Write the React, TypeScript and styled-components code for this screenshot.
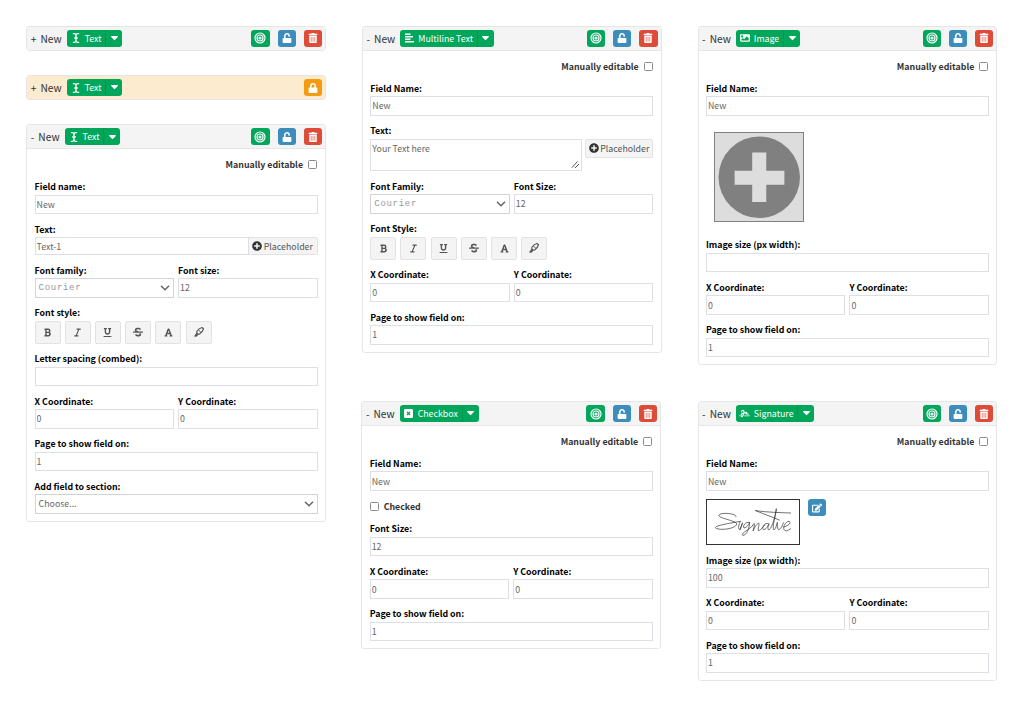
import React from 'react';
import {
    FaBold, FaEdit, FaFont, FaImage, FaLock,
    FaPlusCircle, FaStrikethrough, FaTrashAlt, FaUnderline, FaUnlock
} from 'react-icons/fa';
import { FaItalic, FaSignature } from 'react-icons/fa6';
import { LuTarget } from 'react-icons/lu';
import { PiCursorTextBold } from 'react-icons/pi';
import styled, { createGlobalStyle } from 'styled-components';


const GlobalStyle = createGlobalStyle`
    * {
        box-sizing: border-box;
    }

    body {
        margin: 0;
        background-color: #fff;
        color: #333;
        font-family: "Noto Sans CJK JP", "Open Sans", sans-serif;
        font-size: 8.8px;
    }

    input, textarea, button {
        font-family: inherit;
        font-size: inherit;
        margin: 0;
    }
`

const LinesIcon = () => (
    <svg width="9" height="10" viewBox="0 0 18 20" fill="currentColor">
        <rect x="0" y="1" width="11" height="3" />
        <rect x="0" y="6" width="16" height="3" />
        <rect x="0" y="11" width="11" height="3" />
        <rect x="0" y="16" width="18" height="3" />
    </svg>
)

const CrossBoxIcon = () => (
    <svg width="9" height="9" viewBox="0 0 18 18">
        <rect width="18" height="18" rx="2.5" fill="#fff" />
        <path d="M6 6L12 12M12 6L6 12" stroke="#00a65a" strokeWidth="2.6" />
    </svg>
)

const PenIcon = () => (
    <svg width="12" height="12" viewBox="0 0 24 24" fill="none" stroke="currentColor" strokeLinejoin="round" strokeLinecap="round">
        <path d="M18 3L21 5.500C20 9.500 17 14 12.500 16.500L8 15.500L7.500 11C10 7 14 4 18 3Z" strokeWidth="2.2" />
        <path d="M11.500 8.500L15.500 12.500" strokeWidth="2" />
        <path d="M7.500 14L3 20.500H7.500L10 17Z" strokeWidth="1.4" fill="currentColor" />
    </svg>
)

const Chevron = () => (
    <svg width="10" height="6" viewBox="0 0 20 12" fill="none" stroke="#666" strokeWidth="3">
        <path d="M2 1.5L10 9.5L18 1.5" />
    </svg>
)

const SignatureDrawing = () => (
    <svg width="92" height="44" viewBox="19 17 276 132" fill="none" stroke="#333" strokeWidth="2.1" strokeLinecap="round">
        <path d="M106 67C112 60 72 53 57 60C44 70 94 76 107 86C116 98 72 110 48 103C34 97 60 91 119 81" />
        <path d="M119 81C114 90 111 104 117 106C121 100 122 92 125 88M125 86L119 106" />
        <path d="M146 84C134 82 125 95 130 101C138 101 144 90 147 84C146 102 138 124 126 123C120 117 140 110 156 94" />
        <path d="M156 94C160 86 162 84 161 94L157 110C163 96 172 84 175 87C177 93 168 110 175 109C182 105 188 97 193 92" />
        <path d="M203 88C192 83 182 99 188 106C196 106 202 95 205 88C201 98 200 108 206 106C214 99 224 68 227 43C225 66 214 95 219 106C224 108 227 94 230 84C230 94 230 109 236 106C243 99 246 92 248 85" />
        <path d="M248 98C258 97 271 88 267 82C260 76 246 94 250 106C255 113 264 108 270 103" />
        <path d="M165 49L236 77M165 49C200 54 240 55 270 56" />
    </svg>
)

type PanelProps = {
    icon: React.ReactNode;
    type: string;
    locked?: boolean;
    offset?: number;
    children?: React.ReactNode;
}

function Panel({ icon, type, locked, offset, children }: PanelProps) {
    return (
        <Card $offset={offset}>
            <Header $locked={locked} $open={!!children}>
                <Toggle>{children ? '-' : '+'}</Toggle>
                <Title>New</Title>
                <TypeButton>
                    <span className='icon'>{icon}</span>
                    <span className='name'>{type}</span>
                    <span className='caret'>
                        <svg width="7" height="4.5" viewBox="0 0 16 10" fill="#fff">
                            <path d="M1.5 0H14.5C16 0 16 1.6 15 2.6L9.4 8.6Q8 10 6.6 8.6L1 2.6C0 1.6 0 0 1.5 0Z" />
                        </svg>
                    </span>
                </TypeButton>
                <Actions>
                    {locked ? (
                        <IconButton $color='#f39c12'><FaLock size={10} /></IconButton>
                    ) : (
                        <>
                            <IconButton $color='#00a65a'><LuTarget size={12} strokeWidth={2.4} /></IconButton>
                            <IconButton $color='#3c8dbc'><FaUnlock size={10} /></IconButton>
                            <IconButton $color='#dd4b39'><FaTrashAlt size={10} /></IconButton>
                        </>
                    )}
                </Actions>
            </Header>
            {children && (
                <Body>
                    <CheckRow $right>
                        Manually editable <CheckBox type='checkbox' />
                    </CheckRow>
                    {children}
                </Body>
            )}
        </Card>
    )
}

function Field({ label, children }: { label: string; children: React.ReactNode }) {
    return (
        <FieldBox>
            <Label>{label}</Label>
            {children}
        </FieldBox>
    )
}

const TextField = ({ label, value = '' }: { label: string; value?: string }) => (
    <Field label={label}>
        <Input defaultValue={value} />
    </Field>
)

const Coordinates = () => (
    <Columns>
        <TextField label='X Coordinate:' value='0' />
        <TextField label='Y Coordinate:' value='0' />
    </Columns>
)

const PageField = () => <TextField label='Page to show field on:' value='1' />

const FontFields = ({ family, size }: { family: string; size: string }) => (
    <Columns>
        <Field label={family}>
            <Select $mono>Courier <Chevron /></Select>
        </Field>
        <TextField label={size} value='12' />
    </Columns>
)

const FontStyle = ({ label }: { label: string }) => (
    <Field label={label}>
        <StyleButtons>
            <button><FaBold size={9} /></button>
            <button><FaItalic size={9} /></button>
            <button><FaUnderline size={9} /></button>
            <button><FaStrikethrough size={10} /></button>
            <button><FaFont size={9} /></button>
            <button><PenIcon /></button>
        </StyleButtons>
    </Field>
)

function App() {
    return (
        <Page>
            <GlobalStyle />
            <Column $gap={24.2}>
                <Panel icon={<PiCursorTextBold size={14} />} type='Text' />
                <Panel icon={<PiCursorTextBold size={14} />} type='Text' locked />
                <Panel icon={<PiCursorTextBold size={14} />} type='Text'>
                    <TextField label='Field name:' value='New' />
                    <Field label='Text:'>
                        <InputGroup>
                            <Input $short defaultValue='Text-1' />
                            <Placeholder $joined><FaPlusCircle size={10} />Placeholder</Placeholder>
                        </InputGroup>
                    </Field>
                    <FontFields family='Font family:' size='Font size:' />
                    <FontStyle label='Font style:' />
                    <TextField label='Letter spacing (combed):' />
                    <Coordinates />
                    <PageField />
                    <Field label='Add field to section:'>
                        <Select>Choose... <Chevron /></Select>
                    </Field>
                </Panel>
            </Column>
            <Column $gap={48.5}>
                <Panel icon={<LinesIcon />} type='Multiline Text' offset={0.6}>
                    <TextField label='Field Name:' value='New' />
                    <Field label='Text:'>
                        <InputGroup $gap={3}>
                            <TextArea>
                                Your Text here
                                <svg width="9" height="9" viewBox="0 0 18 18" stroke="#555" strokeWidth="2">
                                    <path d="M2 15L13 3M8 16L16 8" />
                                </svg>
                            </TextArea>
                            <Placeholder><FaPlusCircle size={10} />Placeholder</Placeholder>
                        </InputGroup>
                    </Field>
                    <FontFields family='Font Family:' size='Font Size:' />
                    <FontStyle label='Font Style:' />
                    <Coordinates />
                    <PageField />
                </Panel>
                <Panel icon={<CrossBoxIcon />} type='Checkbox'>
                    <TextField label='Field Name:' value='New' />
                    <CheckRow>
                        <CheckBox type='checkbox' /> Checked
                    </CheckRow>
                    <TextField label='Font Size:' value='12' />
                    <Coordinates />
                    <PageField />
                </Panel>
            </Column>
            <Column $gap={35.8}>
                <Panel icon={<FaImage size={10} />} type='Image'>
                    <TextField label='Field Name:' value='New' />
                    <ImageDrop>
                        <svg width="88" height="88" viewBox="0 0 88 88">
                            <circle cx="44" cy="44" r="40.5" fill="#808080" />
                            <path d="M44 19.5V68.5M19.5 44.5H69" stroke="#ddd" strokeWidth="14" />
                        </svg>
                    </ImageDrop>
                    <TextField label='Image size (px width):' />
                    <Coordinates />
                    <PageField />
                </Panel>
                <Panel icon={<FaSignature size={11} />} type='Signature'>
                    <TextField label='Field Name:' value='New' />
                    <SignatureRow>
                        <SignatureBox><SignatureDrawing /></SignatureBox>
                        <IconButton $color='#3c8dbc'><FaEdit size={10} /></IconButton>
                    </SignatureRow>
                    <TextField label='Image size (px width):' value='100' />
                    <Coordinates />
                    <PageField />
                </Panel>
            </Column>
        </Page>
    )
}

export default App


const Page = styled.div`
    display: flex;
    align-items: flex-start;
    gap: 35.5px;
    padding: 25.9px 0 0 26.3px;
`

const Column = styled.div<{ $gap: number }>`
    display: flex;
    flex-direction: column;
    gap: ${({ $gap }) => $gap}px;
    width: 299.6px;

    & + & + & {
        margin-left: 1.1px;
    }
`

const Card = styled.div<{ $offset?: number }>`
    width: 299.6px;
    margin-left: ${({ $offset }) => $offset || 0}px;
    border: 1px solid #e6e6e6;
    border-radius: 3px;
    overflow: hidden;
`

const Header = styled.div<{ $locked?: boolean; $open: boolean }>`
    display: flex;
    align-items: center;
    height: ${({ $open }) => $open ? 24 : 23}px;
    padding: 0 3px 0 3.5px;
    background-color: ${({ $locked }) => $locked ? '#fdebd0' : '#f4f4f4'};
    border-bottom: ${({ $open }) => $open ? '1px solid #e6e6e6' : 'none'};
    font-size: 10.2px;
`

const Toggle = styled.span`
    margin-right: 4px;
`

const Title = styled.span`
    margin-right: 5px;
`

const TypeButton = styled.button`
    display: flex;
    align-items: stretch;
    height: 17px;
    padding: 0;
    border: none;
    border-radius: 3px;
    background-color: #00a65a;
    color: #fff;
    font-size: 8.8px;

    span {
        display: flex;
        align-items: center;
    }

    .icon {
        justify-content: center;
        width: 18px;
    }

    .name {
        padding-right: 3.7px;
    }

    .caret {
        justify-content: center;
        width: 17.2px;
        border-left: 1px solid #009551;
    }
`

const Actions = styled.div`
    display: flex;
    gap: 8px;
    margin-left: auto;
`

const IconButton = styled.button<{ $color: string }>`
    display: flex;
    align-items: center;
    justify-content: center;
    width: 18.2px;
    height: 17px;
    padding: 0;
    border: none;
    border-radius: 3px;
    background-color: ${({ $color }) => $color};
    color: #fff;
`

const Body = styled.div`
    display: flex;
    flex-direction: column;
    gap: 8.5px;
    padding: 8px 7.3px 7px;
`

const CheckRow = styled.label<{ $right?: boolean }>`
    display: flex;
    align-items: center;
    justify-content: ${({ $right }) => $right ? 'flex-end' : 'flex-start'};
    gap: 5px;
    height: 14.3px;
    padding-right: ${({ $right }) => $right ? 0.6 : 0}px;
    font-weight: 700;
`

const CheckBox = styled.input`
    appearance: none;
    width: 9px;
    height: 9px;
    border: 1px solid #8a8a8a;
    border-radius: 1.5px;
    background-color: #fff;
`

const FieldBox = styled.div`
    flex: 1;
    min-width: 0;
`

const Label = styled.div`
    height: 14.5px;
    line-height: 14.5px;
    color: #000;
    font-weight: 700;
`

const Input = styled.input<{ $short?: boolean }>`
    display: block;
    width: 100%;
    height: ${({ $short }) => $short ? 18 : 19.5}px;
    padding: 0 1px;
    border: 1px solid #dcdfe6;
    border-radius: 0;
    outline: none;
    background-color: #fff;
    color: #666;
`

const Columns = styled.div`
    display: flex;
    gap: 4px;
`

const Select = styled.div<{ $mono?: boolean }>`
    display: flex;
    align-items: center;
    justify-content: space-between;
    height: 19.5px;
    padding: 0 3px;
    border: 1px solid #d4d4d4;
    color: ${({ $mono }) => $mono ? '#999' : '#666'};
    font-family: ${({ $mono }) => $mono ? '"Liberation Mono", monospace' : 'inherit'};
    font-size: ${({ $mono }) => $mono ? '9px' : 'inherit'};
    letter-spacing: ${({ $mono }) => $mono ? '0.7px' : 'normal'};
`

const InputGroup = styled.div<{ $gap?: number }>`
    display: flex;
    align-items: flex-start;
    gap: ${({ $gap }) => $gap || 0}px;
`

const Placeholder = styled.button<{ $joined?: boolean }>`
    display: flex;
    flex: none;
    align-items: center;
    justify-content: center;
    gap: 1.5px;
    width: ${({ $joined }) => $joined ? 69 : 68.5}px;
    height: ${({ $joined }) => $joined ? 18 : 19.5}px;
    padding: 0;
    border: 1px solid #e2e2e2;
    border-left-width: ${({ $joined }) => $joined ? 0 : 1}px;
    border-radius: ${({ $joined }) => $joined ? '0 2px 2px 0' : '2px'};
    background-color: #f4f4f4;
    color: #555;

    svg {
        color: #333;
    }
`

const TextArea = styled.div`
    display: flex;
    flex: 1;
    justify-content: space-between;
    height: 32.5px;
    padding: 2px 1px 1px;
    border: 1px solid #dcdfe6;
    color: #666;
    line-height: 13px;

    svg {
        align-self: flex-end;
    }
`

const StyleButtons = styled.div`
    display: flex;
    gap: 4.2px;

    button {
        display: flex;
        align-items: center;
        justify-content: center;
        width: 26px;
        height: 23px;
        padding: 0;
        border: 1px solid #e2e2e2;
        border-radius: 2px;
        background-color: #f4f4f4;
        color: #555;
    }
`

const ImageDrop = styled.div`
    height: 105.7px;
    padding: 7.5px 8px;

    svg {
        display: block;
        width: 90.5px;
        height: 90.5px;
        border: 1px solid #808080;
        background-color: #ddd;
    }
`

const SignatureRow = styled.div`
    display: flex;
    align-items: flex-start;
    gap: 8px;
`

const SignatureBox = styled.div`
    width: 94px;
    height: 45.7px;
    border: 1px solid #333;

    svg {
        display: block;
    }
`
